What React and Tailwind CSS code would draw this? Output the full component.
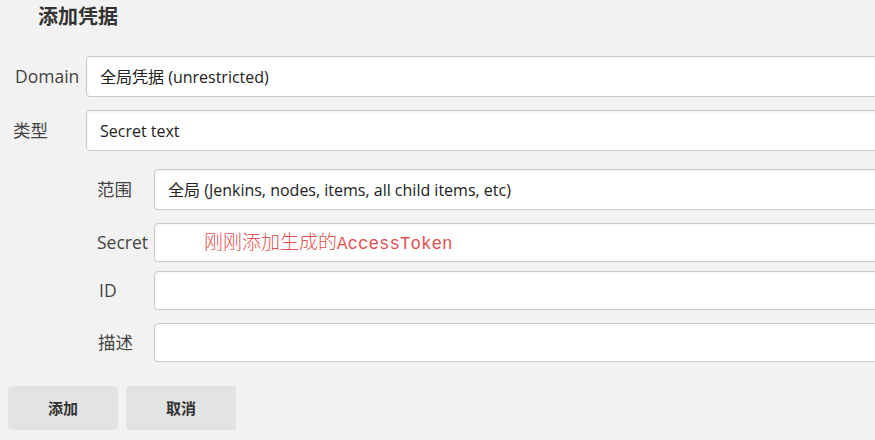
const font = { fontFamily: '"Open Sans", "Noto Sans CJK SC", sans-serif' };

function Field({ children, className = "" }) {
  return (
    <div
      className={`flex-1 -mr-[20px] flex items-center rounded-l-[4px] border border-[#c9c9c9] bg-white shadow-[inset_0_2px_3px_rgba(0,0,0,0.04)] text-[16px] text-[#222] ${className}`}
    >
      {children}
    </div>
  );
}

export default function App() {
  return (
    <div className="w-full h-[440px] overflow-hidden bg-[#f2f2f2]" style={font}>
      {/* Title */}
      <div className="pl-[38px] pt-[6px] text-[20px] leading-[22px] font-bold text-[#333]">
        添加凭据
      </div>

      {/* Domain */}
      <div className="mt-[28px] flex items-center pl-[15px]">
        <label className="w-[71px] text-[17.5px] text-[#444]">Domain</label>
        <Field className="h-[41px] pl-[13px]">全局凭据 (unrestricted)</Field>
      </div>

      {/* 类型 */}
      <div className="mt-[13px] flex items-center pl-[13px]">
        <label className="w-[73px] text-[17.5px] text-[#444]">类型</label>
        <Field className="h-[41px] pl-[13px]">Secret text</Field>
      </div>

      {/* Nested fields */}
      <div className="pl-[97px]">
        <div className="mt-[18px] flex items-center">
          <label className="w-[57px] text-[17.5px] text-[#444]">范围</label>
          <Field className="h-[41px] pl-[13px]">
            全局 (Jenkins, nodes, items, all child items, etc)
          </Field>
        </div>

        <div className="mt-[13px] flex items-center">
          <label className="w-[57px] text-[17.5px] text-[#444]">Secret</label>
          <Field className="h-[39px] pl-[49px]">
            <span className="text-[#e25252] leading-none">
              <span className="text-[19px] font-light" style={{ fontFamily: '"Noto Sans CJK SC", serif' }}>
                刚刚添加生成的
              </span>
              <span className="text-[17.5px]" style={{ fontFamily: '"Liberation Mono", monospace' }}>
                AccessToken
              </span>
            </span>
          </Field>
        </div>

        <div className="mt-[9px] flex items-center">
          <label className="w-[57px] pl-[2px] text-[17.5px] text-[#444]">ID</label>
          <Field className="h-[39px]" />
        </div>

        <div className="mt-[13px] flex items-center">
          <label className="w-[57px] pl-[1px] text-[17.5px] text-[#444]">描述</label>
          <Field className="h-[39px]" />
        </div>
      </div>

      {/* Buttons */}
      <div className="mt-[24px] flex gap-[8px] pl-[8px]">
        <button className="w-[110px] h-[44px] rounded-[4px] bg-[#e3e3e3] text-[15px] font-bold text-[#333]">
          添加
        </button>
        <button className="w-[110px] h-[44px] rounded-[4px] bg-[#e3e3e3] text-[15px] font-bold text-[#333]">
          取消
        </button>
      </div>
    </div>
  );
}
